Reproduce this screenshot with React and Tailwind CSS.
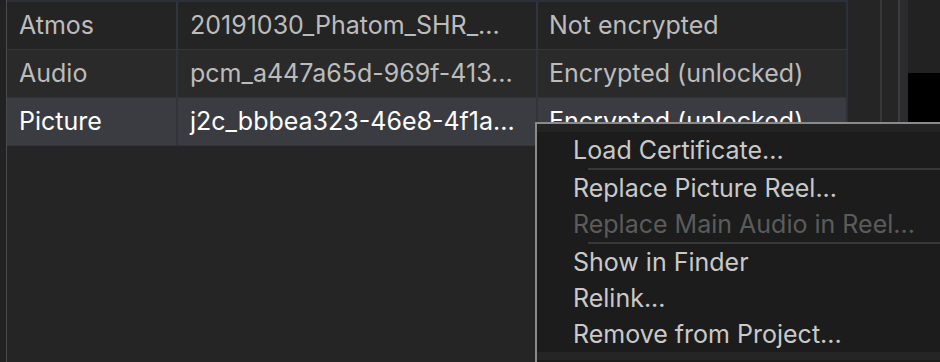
const rows = [
  { type: "Atmos", file: "20191030_Phatom_SHR_...", status: "Not encrypted", bg: "bg-[#242424]" },
  { type: "Audio", file: "pcm_a447a65d-969f-413...", status: "Encrypted (unlocked)", bg: "bg-[#2a2a2a]" },
  { type: "Picture", file: "j2c_bbbea323-46e8-4f1a...", status: "Encrypted (unlocked)", bg: "bg-[#3b3c41]", selected: true },
];

const menu = [
  [{ label: "Load Certificate..." }],
  [{ label: "Replace Picture Reel..." }, { label: "Replace Main Audio in Reel...", disabled: true }],
  [{ label: "Show in Finder" }, { label: "Relink..." }, { label: "Remove from Project..." }],
];

export default function App() {
  return (
    <div className="relative w-[940px] h-[362px] overflow-hidden bg-[#252525] flex font-['Inter',sans-serif] text-[25px]">
      <div className="w-[6px] bg-[#222222]" />
      <div className="w-px bg-[#4a4a4f]" />

      {/* reel table */}
      <div className="w-[841px] flex flex-col border-t-2 border-r-2 border-[#2c3039]">
        {rows.map((r) => (
          <div
            key={r.type}
            className={`flex h-[48px] border-b border-[#2f343d] ${r.bg} ${r.selected ? "text-white" : "text-[#bcbcbc]"}`}
          >
            <div className="w-[171px] pl-[12px] pt-px flex items-center border-r-2 border-[#2f343d]">{r.type}</div>
            <div className="w-[360px] pl-[12px] pt-px flex items-center border-r-2 border-[#2f343d] whitespace-nowrap">{r.file}</div>
            <div className="flex-1 pl-[11px] pt-px flex items-center whitespace-nowrap">{r.status}</div>
          </div>
        ))}
        <div className="flex-1 bg-[#252525]" />
      </div>

      {/* side panels */}
      <div className="w-[32px] bg-[#252525]" />
      <div className="w-[2px] bg-[#38383c]" />
      <div className="w-[16px] bg-[#252525]" />
      <div className="w-[2px] bg-[#3a3a3e]" />
      <div className="w-[8px] bg-[#2b2b2e]" />
      <div className="flex-1 flex flex-col">
        <div className="h-[73px] bg-[#222222]" />
        <div className="flex-1 bg-black" />
      </div>

      {/* context menu */}
      <div className="absolute left-[535px] top-[122px] w-[430px] h-[242px] border-2 border-[#8a8a8a] bg-[#1c1c1c] flex flex-col text-[#c9c9c9]">
        <div className="h-[8px] bg-[#232323]" />
        {menu.map((group, gi) => (
          <div key={gi}>
            {gi > 0 && (
              <div className="pl-[51px] pr-[12px]">
                <div className="h-[2px] bg-[#383838]" />
              </div>
            )}
            {group.map((item) => (
              <div
                key={item.label}
                className={`h-[36px] pl-[36px] pt-[2px] flex items-center whitespace-nowrap ${item.disabled ? "text-[#5b5b5b]" : ""}`}
              >
                {item.label}
              </div>
            ))}
          </div>
        ))}
        <div className="h-[8px] bg-[#252525]" />
      </div>
    </div>
  );
}
